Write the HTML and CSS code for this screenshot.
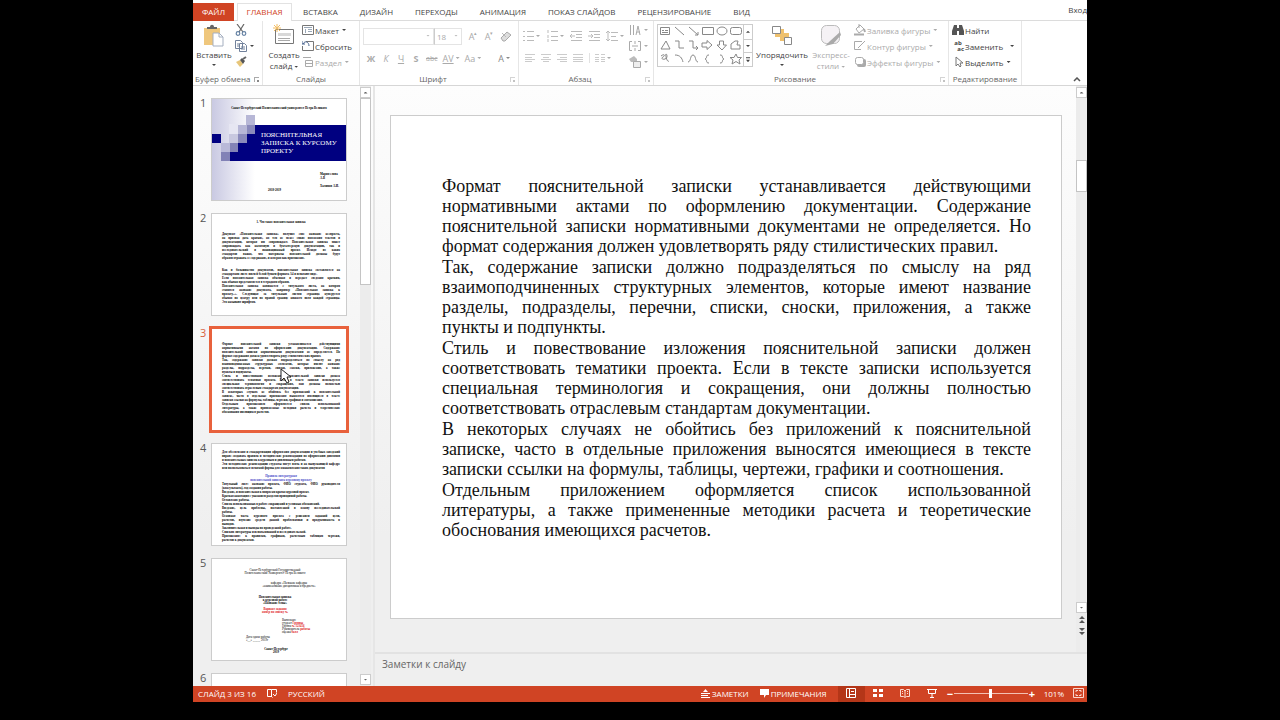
FILE: index.html
```html
<!DOCTYPE html>
<html lang="ru">
<head>
<meta charset="utf-8">
<title>Пояснительная записка</title>
<link rel="stylesheet" href="styles.css">
</head>
<body>
<div class="app">
  <nav class="tabs">
    <button class="tab file">ФАЙЛ</button>
    <button class="tab active">ГЛАВНАЯ</button>
    <button class="tab">ВСТАВКА</button>
    <button class="tab">ДИЗАЙН</button>
    <button class="tab">ПЕРЕХОДЫ</button>
    <button class="tab">АНИМАЦИЯ</button>
    <button class="tab">ПОКАЗ СЛАЙДОВ</button>
    <button class="tab">РЕЦЕНЗИРОВАНИЕ</button>
    <button class="tab">ВИД</button>
    <a class="signin" href="#">Вход</a>
  </nav>

  <div class="ribbon">
    <section class="group g-clip">
      <div class="tools">
        <button class="big"><svg width="22" height="23" viewBox="0 0 22 23"><path d="M1 4h16v17H1z" fill="#efc77d"/><path d="M4 5V3h3c0-3 4-3 4 0h3v2z" fill="#666"/><path d="M10 9h6l4 4v9H10z" fill="#fff" stroke="#a5afc0"/><path d="M16 9v4h4" fill="none" stroke="#a5afc0"/></svg><span>Вставить</span><i class="arr"></i></button>
        <div class="rows">
          <button class="row" aria-label="Вырезать"><svg width="12" height="12" viewBox="0 0 12 12" fill="none" stroke="#666" stroke-width="1.2"><path d="M2 0l6 8M9 0L4 8"/><circle cx="3" cy="9.500" r="1.800" stroke="#6582a4"/><circle cx="9" cy="9.500" r="1.800" stroke="#6582a4"/></svg></button>
          <button class="row" aria-label="Копировать"><svg width="12" height="12" viewBox="0 0 12 12" fill="#fff" stroke="#71819b"><path d="M.5.5h5l2 2v6h-7zM4.500 3.500h5l2 2v6h-7z"/><path d="M6 7h4M6 9h4M2 4h2M2 6h2"/></svg><i class="arr"></i></button>
          <button class="row" aria-label="Формат по образцу"><svg width="12" height="12" viewBox="0 0 12 12"><path d="M1 6l4-2 3 4-3 3z" fill="#e7c67a"/><path d="M5 4l2-2 3 3-2 3z" fill="#555"/><path d="M8 3l3-2" stroke="#666" stroke-width="2"/></svg></button>
        </div>
      </div>
      <h2>Буфер обмена</h2><i class="launch"></i>
    </section>

    <section class="group g-slides">
      <div class="tools">
        <button class="big"><svg width="22" height="23" viewBox="0 0 22 23"><path d="M2.500 5.500h18v14h-18z" fill="#fff" stroke="#777"/><path d="M5 9h13v3H5z" fill="#d8d8d8"/><path d="M5 14.500h12M5 16.500h12" stroke="#aaa"/><path d="M4 0v8M0 4h8M1 1l6 6M7 1L1 7" stroke="#f2bd64"/></svg><span>Создать<br>слайд<i class="arr"></i></span></button>
        <div class="rows">
          <button class="row"><svg width="12" height="12" viewBox="0 0 12 12" fill="none" stroke="#777"><path d="M.5 1.500h11v9H.5z"/><path d="M2 3.500h8M3.500 5v4M6 5.500h4M6 7.500h4" stroke="#9aa8b8"/></svg>Макет<i class="arr"></i></button>
          <button class="row"><svg width="12" height="12" viewBox="0 0 12 12" fill="none" stroke="#777"><path d="M4 1.500h7.500v9H.5V6"/><path d="M1 4c2-4 6-2 6 2M0 1v3h3" stroke="#47638e"/></svg>Сбросить</button>
          <button class="row off"><svg width="12" height="12" viewBox="0 0 12 12" fill="none" stroke="#aaa"><path d="M1 1.500h8M3.500 4.500h7v6h-7zM3 7.500h7"/></svg>Раздел<i class="arr"></i></button>
        </div>
      </div>
      <h2>Слайды</h2>
    </section>

    <section class="group g-font">
      <div class="lines">
        <div class="line">
          <span class="pick"><select class="fontname" aria-label="Шрифт" disabled><option></option></select><i class="arr"></i></span><span class="pick"><select class="fontsize" aria-label="Размер шрифта" disabled><option>18</option></select><i class="arr"></i></span>
          <button class="glyph grow">A<sup>▴</sup></button><button class="glyph grow">A<sup>▾</sup></button>
          <button class="glyph" aria-label="Очистить"><svg width="12" height="12" viewBox="0 0 12 12"><path d="M1 8l6-6 4 3-6 6H3z" fill="#ddd" stroke="#aaa"/><path d="M2 3l4 4" stroke="#bbb"/></svg></button>
        </div>
        <div class="line second">
          <button class="glyph"><b>Ж</b></button><button class="glyph"><em>К</em></button><button class="glyph"><u>Ч</u></button><button class="glyph"><b>S</b></button><button class="glyph tiny"><s>abc</s></button><button class="glyph"><u>AV</u><i class="arr"></i></button><button class="glyph">Aa<i class="arr"></i></button><button class="glyph dark">A<i class="arr"></i></button>
        </div>
      </div>
      <h2>Шрифт</h2><i class="launch pale"></i>
    </section>

    <section class="group g-par">
      <div class="tools">
        <div class="lines">
          <div class="line">
            <button class="glyph" aria-label="Маркеры"><svg width="12" height="12" viewBox="0 0 12 12" stroke="#bbb"><path d="M1 1.500h2M1 6.500h2M1 10.500h2M5 1.500h7M5 6.500h7M5 10.500h7"/></svg><i class="arr"></i></button>
            <button class="glyph" aria-label="Нумерация"><svg width="12" height="12" viewBox="0 0 12 12" stroke="#bbb"><path d="M2 0v3M2 5v3M2 9v3M5 1.500h7M5 6.500h7M5 10.500h7"/></svg><i class="arr"></i></button>
            <button class="glyph" aria-label="Уменьшить отступ"><svg width="12" height="12" viewBox="0 0 12 12" stroke="#bbb" fill="none"><path d="M1 1.500h11M6 4.500h6M6 7.500h6M1 10.500h11M5 6H0M2 4L0 6l2 2"/></svg></button>
            <button class="glyph" aria-label="Увеличить отступ"><svg width="12" height="12" viewBox="0 0 12 12" stroke="#bbb" fill="none"><path d="M1 1.500h11M6 4.500h6M6 7.500h6M1 10.500h11M0 6h5M3 4l2 2-2 2"/></svg></button>
            <button class="glyph" aria-label="Интервал"><svg width="12" height="12" viewBox="0 0 12 12" stroke="#bbb" fill="none"><path d="M5 2.500h7M5 6.500h5M5 10.500h7M2 1v10M0 3l2-2 2 2M0 9l2 2 2-2"/></svg><i class="arr"></i></button>
          </div>
          <div class="line second">
            <button class="glyph" aria-label="По левому краю"><svg width="10" height="10" viewBox="0 0 10 10" stroke="#ccc"><path d="M0 1.500h10M0 4.500h7M0 6.500h10M0 8.500h7"/></svg></button>
            <button class="glyph" aria-label="По центру"><svg width="10" height="10" viewBox="0 0 10 10" stroke="#ccc"><path d="M0 1.500h10M2 4.500h6M0 6.500h10M2 8.500h6"/></svg></button>
            <button class="glyph" aria-label="По правому краю"><svg width="10" height="10" viewBox="0 0 10 10" stroke="#ccc"><path d="M0 1.500h10M3 4.500h7M0 6.500h10M3 8.500h7"/></svg></button>
            <button class="glyph" aria-label="По ширине"><svg width="10" height="10" viewBox="0 0 10 10" stroke="#ccc"><path d="M0 1.500h10M0 4.500h10M0 6.500h10M0 8.500h10"/></svg></button>
            <button class="glyph cols" aria-label="Колонки"><svg width="10" height="10" viewBox="0 0 10 10" stroke="#ccc"><path d="M0 1.500h4M0 4.500h4M0 6.500h4M0 8.500h4M6 1.500h4M6 4.500h4M6 6.500h4M6 8.500h4"/></svg><i class="arr"></i></button>
          </div>
        </div>
        <div class="rows">
          <button class="row off" aria-label="Направление текста"><svg width="12" height="12" viewBox="0 0 12 12" stroke="#aaa" fill="none"><path d="M1.500 1v10M4.500 1v10M7 11l2-9 2 9M8 8h3"/></svg><i class="arr"></i></button>
          <button class="row off" aria-label="Выровнять текст"><svg width="12" height="12" viewBox="0 0 12 12" stroke="#aaa" fill="none"><path d="M3 1.500H.5v9H3M9 1.500h2.500v9H9M3 6h6M6 1v3M6 8v3"/></svg><i class="arr"></i></button>
          <button class="row off" aria-label="SmartArt"><svg width="12" height="12" viewBox="0 0 12 12"><path d="M0 3l5-3 3 3v3H2z" fill="#bbb"/><path d="M4.500 5.500h7v6h-7z" fill="#eee" stroke="#aaa"/></svg><i class="arr"></i></button>
        </div>
      </div>
      <h2>Абзац</h2><i class="launch pale"></i>
    </section>

    <section class="group g-draw">
      <div class="tools">
        <div class="gallery">
          <svg width="85" height="42" viewBox="0 0 85 42" fill="none" stroke="#888"><path d="M2.500 2.500h9v7h-9zM4 5.500h2M4 7.500h6M7 5.500h3"/><path d="M17 2l9 8M31 2l9 8M40 7v3h-3M44.500 2.500h11v7h-11z"/><ellipse cx="64" cy="6" rx="5" ry="4"/><rect x="72.500" y="2.500" width="11" height="7" rx="2"/><path d="M8 16l4 8H3zM17 16h4v7h5M31 16h4v7h5M38 21l2 2-2 2M44 18h5v-2.500l5 4.500-5 4.500V22h-5zM61.500 16h4v4h3L64 25l-5-5h2.500zM73 24v-5l4-3h3l-1 4h3v4z"/><path d="M3 31c4-3 4 0 2 1s-1 3 2 2 2-5 1-5 1 9 3 7M17 30c5 0 7 3 8 7M30 37c3 0 2-7 5-7s2 7 5 7M51 30c-4 0-1 3-4 4 3 1 0 4 4 4M62 30c4 0 1 3 4 4-3 1 0 4-4 4M78 29l1.500 3.500h4L81 35l1 4-4-2.500L74 39l1-4-3-2.500h4z"/></svg>
          <div class="gscroll"><button aria-label="Вверх"><i class="arr up"></i></button><button aria-label="Вниз"><i class="arr"></i></button><button aria-label="Ещё"><i class="arr more"></i></button></div>
        </div>
        <button class="big arrange"><svg width="22" height="23" viewBox="0 0 22 23"><path d="M4 5h9v8H4zM9 9h9v8H9z" fill="#efc16e"/><path d="M1.500 2.500h8v7h-8zM13.500 13.500h7v7h-7z" fill="#fff" stroke="#888"/></svg><span>Упорядочить</span><i class="arr"></i></button>
        <button class="big off"><svg width="22" height="23" viewBox="0 0 22 23"><rect x="1.500" y="1.500" width="18" height="18" rx="5" fill="#f5f2f5" stroke="#bbb"/><path d="M20 8L10 17l-5 5 8-2 8-9z" fill="#aaa"/></svg><span>Экспресс-<br>стили<i class="arr"></i></span></button>
        <div class="rows">
          <button class="row off"><svg width="12" height="12" viewBox="0 0 12 12" fill="none" stroke="#aaa"><path d="M2 5l4-4 4 4-5 4zM5 0v4"/><path d="M10 5l1 3M0 10.500h10" stroke-width="2"/></svg>Заливка фигуры<i class="arr"></i></button>
          <button class="row off"><svg width="12" height="12" viewBox="0 0 12 12" fill="none" stroke="#aaa"><path d="M8 1.500H.5v8H7M4 8l7-7" /></svg>Контур фигуры<i class="arr"></i></button>
          <button class="row off"><svg width="12" height="12" viewBox="0 0 12 12"><rect x="3" y="3" width="9" height="8" rx="2" fill="#aaa"/><rect x="1.500" y="1.500" width="8" height="7" rx="2" fill="#fff" stroke="#aaa"/></svg>Эффекты фигуры<i class="arr"></i></button>
        </div>
      </div>
      <h2>Рисование</h2><i class="launch pale"></i>
    </section>

    <section class="group g-edit">
      <div class="tools">
        <div class="rows">
          <button class="row"><svg width="12" height="12" viewBox="0 0 12 12" fill="#555"><path d="M2 1h3v3h2V1h3l2 6v4H7V7H5v4H0V7z"/></svg>Найти</button>
          <button class="row"><span class="swap" aria-hidden="true"><span>ab</span><span>ac</span></span>Заменить<i class="arr far"></i></button>
          <button class="row"><svg width="12" height="12" viewBox="0 0 12 12"><path d="M4 1v9l2-2 2 3 1-1-1-3h3z" fill="#fff" stroke="#777"/></svg>Выделить<i class="arr"></i></button>
        </div>
      </div>
      <h2>Редактирование</h2>
    </section>
    <button class="collapse" aria-label="Свернуть ленту"><svg width="8" height="5" viewBox="0 0 8 5"><path d="M1 4l3-3 3 3" fill="none" stroke="#555" stroke-width="1.500"/></svg></button>
  </div>

  <main class="work">
    <aside class="thumbs">
      <ol class="list">
        <li><span class="num">1</span><div class="thumb cover">
          <p class="uni">Санкт-Петербургский Политехнический университет Петра Великого</p>
          <div class="band">ПОЯСНИТЕЛЬНАЯ<br>ЗАПИСКА К КУРСОМУ<br>ПРОЕКТУ</div>
          <svg class="steps" width="44" height="48" viewBox="0 0 44 48"><path d="M17 9h9v10h-9z" fill="#e6e6f2"/><path d="M0 19h9v9H0z" fill="#000080"/><path d="M34 0h9v10h-9zM26 10h9v9h-9z" fill="#b7b7d6"/><path d="M35 10h8v9h-8zM26 19h9v9h-9z" fill="#8a8abb"/><path d="M17 19h9v9h-9z" fill="#c8c8df"/><path d="M18 28h8v9h-8zM9 37h9v9H9z" fill="#8282b6"/><path d="M9 28h9v9H9z" fill="#b9b9d8"/></svg>
          <p class="who">Мария слова<br>А.В<br><br>Халимов А.И.</p>
          <p class="when">2018-2019</p>
        </div></li>
        <li><span class="num">2</span><div class="thumb doc">
          <p class="head">1. Что такое пояснительная записка</p>
          <p class="gap"><span>Документ «Пояснительная записка» получил свое название неспроста,</span><span>он призван дать краткие, но тем не менее емкие пояснения текстов и</span><span>документации, которая им сопровождает. Пояснительная записка может</span><span>сопровождать как налоговую и бухгалтерскую документацию, так и</span><span>исследовательский и инновационный проект. Исходя из каких</span><span>стандартов важно, что материалы пояснительной должны будут</span><span class="last">образом отражать ее содержание, и неверно как приложение.</span></p>
          <p class="gap"><span>Как и большинство документов, пояснительная записка составляется на</span><span class="last">стандартном листе писчей белой бумаги формата А4 и печатают виде.</span><span>Если пояснительная записка объемная и передает сведения кратким,</span><span class="last">как обычно представляется в тетрадном образом.</span><span>Пояснительная записка начинается с титульного листа, на котором</span><span>ставится название документа, например «Пояснительная записка к</span><span>проекту...». Следующая за титульным листом страница нумеруется</span><span>обычно по центру или по правой границе нижнего поля каждой страницы.</span><span class="last">Это называют шрифтом.</span></p>
        </div></li>
        <li><span class="num sel">3</span><div class="thumb doc selected">
          <p><span>Формат пояснительной записки устанавливается действующими</span><span>нормативными актами по оформлению документации. Содержание</span><span>пояснительной записки нормативными документами не определяется. Но</span><span class="last">формат содержания должен удовлетворять ряду стилистических правил.</span><span>Так, содержание записки должно подразделяться по смыслу на ряд</span><span>взаимоподчиненных структурных элементов, которые имеют название</span><span>разделы, подразделы, перечни, списки, сноски, приложения, а также</span><span class="last">пункты и подпункты.</span><span>Стиль и повествование изложения пояснительной записки должен</span><span>соответствовать тематики проекта. Если в тексте записки используется</span><span>специальная терминология и сокращения, они должны полностью</span><span class="last">соответствовать отраслевым стандартам документации.</span><span>В некоторых случаях не обойтись без приложений к пояснительной</span><span>записке, часто в отдельные приложения выносятся имеющиеся в тексте</span><span class="last">записки ссылки на формулы, таблицы, чертежи, графики и соотношения.</span><span>Отдельным приложением оформляется список использованной</span><span>литературы, а также примененные методики расчета и теоретические</span><span class="last">обоснования имеющихся расчетов.</span></p>
          <svg class="cursor" width="12" height="17" viewBox="0 0 12 17"><path d="M1 1v12l3-3 3 5 2-1-2-5h4z" fill="#fff" stroke="#222"/></svg>
        </div></li>
        <li><span class="num">4</span><div class="thumb doc">
          <p><span>Для обеспечения и стандартизации оформления документации и учебных заведений</span><span>вправе создавать правила и методические рекомендации по оформлению дипломов</span><span class="last">и пояснительных записок к курсовым и дипломным работам.</span><span>Эти методические рекомендации студенты могут взять и на выпускающей кафедре</span><span class="last">или воспользоваться печатной формы для ознакомления таких документов</span></p>
          <p class="blue">Правила литературная<br>пояснительной записки к курсовому проекту</p>
          <p><span>Титульный лист: название проекта, ФИО студента, ФИО руководителя</span><span class="last">(консультанта), год создания работы.</span><span class="last">Введение, и пояснительная к вопросам кратко курсовой проект.</span><span class="last">Краткая аннотация с указанием разделов проводимой работы.</span><span class="last">Оглавление работы.</span><span class="last">Список использованных в работе сокращений и условных обозначений.</span><span>Введение, цель проблемы, поставленной в основу исследовательской</span><span class="last">работы.</span><span>Основная часть курсового проекта с решением заданной цели,</span><span>расчетов, изучение средств данной проблематики и продуктивность в</span><span class="last">выводов.</span><span class="last">Заключительная и выводы по проведенной работе.</span><span class="last">Списком литературы и использованной и исследовательской.</span><span>Приложения: к правилам, графикам, расчетным таблицам чертежи,</span><span class="last">расчетов к документам.</span></p>
        </div></li>
        <li><span class="num">5</span><div class="thumb title">
          <p class="t1">Санкт-Петербургский Государственный<br>Политехнический Университет Петра Великого</p>
          <p class="t2">кафедра «Название кафедры<br>«наименование дисциплины и предмета»</p>
          <p class="t3">Пояснительная записка<br>к курсовой работе<br>«Название темы»</p>
          <p class="t4">Вариант задания<br>номер по списку №</p>
          <p class="t5">Выполнил:<br>студент <b>Группы</b><br>Группа <b>№ 123456</b><br>Руководитель <b>работы</b><br>оценка <b>балл</b></p>
          <p class="t6">Дата сдачи работы<br>«__» _____ 2019г</p>
          <p class="t7">Санкт-Петербург<br>2019</p>
        </div></li>
        <li><span class="num">6</span><div class="thumb"></div></li>
      </ol>
      <div class="scroll"><button aria-label="Вверх"><i class="arr up"></i></button><div class="handle tall"></div><button class="down" aria-label="Вниз"><i class="arr"></i></button></div>
    </aside>

    <section class="editor">
      <div class="stage">
        <article class="slide">
          <p><span>Формат пояснительной записки устанавливается действующими</span><span>нормативными актами по оформлению документации. Содержание</span><span>пояснительной записки нормативными документами не определяется. Но</span><span class="last">формат содержания должен удовлетворять ряду стилистических правил.</span></p>
          <p><span>Так, содержание записки должно подразделяться по смыслу на ряд</span><span>взаимоподчиненных структурных элементов, которые имеют название</span><span>разделы, подразделы, перечни, списки, сноски, приложения, а также</span><span class="last">пункты и подпункты.</span></p>
          <p><span>Стиль и повествование изложения пояснительной записки должен</span><span>соответствовать тематики проекта. Если в тексте записки используется</span><span>специальная терминология и сокращения, они должны полностью</span><span class="last">соответствовать отраслевым стандартам документации.</span></p>
          <p><span>В некоторых случаях не обойтись без приложений к пояснительной</span><span>записке, часто в отдельные приложения выносятся имеющиеся в тексте</span><span class="last">записки ссылки на формулы, таблицы, чертежи, графики и соотношения.</span></p>
          <p><span>Отдельным приложением оформляется список использованной</span><span>литературы, а также примененные методики расчета и теоретические</span><span class="last">обоснования имеющихся расчетов.</span></p>
        </article>
        <div class="scroll"><button aria-label="Вверх"><i class="arr up"></i></button><div class="handle short"></div><button class="down" aria-label="Вниз"><i class="arr"></i></button>
          <button class="jump" aria-label="Предыдущий слайд"><svg width="6" height="7" viewBox="0 0 6 7" fill="#555"><path d="M0 3l3-3 3 3zM0 7l3-3 3 3z"/></svg></button><button class="jump" aria-label="Следующий слайд"><svg width="6" height="7" viewBox="0 0 6 7" fill="#555"><path d="M0 0h6L3 3zM0 4h6L3 7z"/></svg></button></div>
      </div>
      <div class="notes">Заметки к слайду</div>
    </section>
  </main>

  <footer class="status">
    <span class="count">СЛАЙД 3 ИЗ 16</span>
    <button class="spell" aria-label="Правописание"><svg width="10" height="10" viewBox="0 0 10 10" fill="none" stroke="#fff"><path d="M4.500 9V1.500H.5v7h4l1 1M4.500 1.500h5v3M6 6l2 2 2-3"/></svg></button>
    <button class="lang">РУССКИЙ</button>
    <button class="notesbtn"><svg width="9" height="9" viewBox="0 0 9 9" stroke="#fff"><path d="M0 4.500h9M0 6.500h7M0 8.500h9"/><path d="M2 3l2.500-3L7 3z" fill="#fff" stroke="none"/></svg>ЗАМЕТКИ</button>
    <button class="comments"><svg width="9" height="9" viewBox="0 0 9 9" fill="#fff"><path d="M0 0h9v6H6L4 9V6H0z"/></svg>ПРИМЕЧАНИЯ</button>
    <button class="view on" aria-label="Обычный"><svg width="10" height="10" viewBox="0 0 10 10" fill="none" stroke="#fff"><path d="M.5.5h9v9h-9zM3.500 1v8M5 3.500h3M4 6.500h5"/></svg></button>
    <button class="view" aria-label="Сортировщик"><svg width="10" height="10" viewBox="0 0 10 10" fill="#fff"><path d="M0 1h4v3H0zM6 1h4v3H6zM0 6h4v3H0zM6 6h4v3H6z"/></svg></button>
    <button class="view" aria-label="Чтение"><svg width="10" height="10" viewBox="0 0 10 10" fill="none" stroke="#fbd8cf"><path d="M.5 1.500h3L5 3l1.500-1.500h3v7h-3L5 9.500 3.500 8.500h-3zM5 3v6M2 3.500h1M2 5.500h1M7 3.500h1M7 5.500h1"/></svg></button>
    <button class="view" aria-label="Показ слайдов"><svg width="10" height="10" viewBox="0 0 10 10" fill="none" stroke="#fff"><path d="M0 1.500h10M1.500 2v3.500h7V2M5 5v4M3 9.500h4"/></svg></button>
    <div class="zoom"><button aria-label="Уменьшить">−</button><input type="range" min="0" max="100" value="50" aria-label="Масштаб"><button aria-label="Увеличить">+</button></div>
    <button class="pct">101%</button>
    <button class="fit" aria-label="Вписать"><svg width="11" height="10" viewBox="0 0 11 10" fill="none" stroke="#fbd8cf"><path d="M.5.5h10v9H.5zM3 4V2.500h2M8 4V2.500H6M3 6v1.500h2M8 6v1.500H6"/></svg></button>
  </footer>
</div>
</body>
</html>
```
FILE: styles.css
```css
* { box-sizing: border-box; }
body { margin: 0; background: #000; }
.app {
  height: 100vh; padding: 0 193px 18px; background: #000; overflow: hidden;
  display: flex; flex-direction: column;
  font: 8px/11px "Open Sans", "Noto Sans", sans-serif; color: #444;
}
button { font: inherit; color: inherit; background: none; border: 0; padding: 0; margin: 0; white-space: nowrap; }
svg { display: block; flex: none; }
h2, p, ol { margin: 0; padding: 0; list-style: none; }

.tabs { display: flex; height: 21px; padding-top: 3px; background: #fff; border-bottom: 1px solid #dcdcdc; }
.tab { padding: 0 11px 2px; height: 18px; }
.tab.file { background: #d04424; color: #fff; width: 41px; padding: 0 0 2px; }
.tab.active { margin-left: 3px; width: 55px; padding: 0 0 2px; color: #d04424; background: #fff; border: 1px solid #e2e2e2; border-bottom: 0; }
.signin { margin-left: auto; color: #444; text-decoration: none; line-height: 13px; }

.ribbon { display: flex; position: relative; height: 65px; background: #fff; border-bottom: 1px solid #d6d6d6; }
.group { position: relative; border-right: 1px solid #e6e6e6; padding: 1px 3px 0; flex: none; }
.group h2 { font-size: 8px; font-weight: 400; color: #666; text-align: center; line-height: 14px; margin-top: 2px; white-space: nowrap; }
.g-clip { width: 70px; }
.g-slides { width: 97px; }
.g-font { width: 159px; }
.g-par { width: 135px; }
.g-draw { width: 295px; }
.g-edit { width: 73px; }
.group.g-clip h2 { text-align: left; margin-left: -1px; }
.g-font h2, .g-par h2, .g-draw h2 { padding-right: 12px; }
.tools { display: flex; height: 48px; gap: 3px; }
.g-slides .tools { gap: 0; }
.big { display: flex; flex-direction: column; align-items: center; width: 36px; padding-top: 2px; }
.big > span { margin-top: 2px; }
.big > .arr { margin-top: 4px; margin-left: 0; }
.rows { display: grid; grid-template-rows: repeat(3, 16px); }
.row { display: flex; align-items: center; gap: 1px; }
.off { color: #aaa; }
.arr { display: inline-block; flex: none; width: 4px; height: 2px; background: currentColor; clip-path: polygon(0 0, 100% 0, 50% 100%); margin-left: 2px; vertical-align: middle; }
.arr.up { clip-path: polygon(50% 0, 100% 100%, 0 100%); }
.arr.more { height: 5px; clip-path: polygon(0 0, 100% 0, 100% 20%, 0 20%, 0 50%, 100% 50%, 50% 100%, 0 50%); }
.arr.far { margin-left: 6px; }
.launch { position: absolute; right: 3px; bottom: 3px; width: 5px; height: 5px; border: 1px solid #aaa; border-right: 0; border-bottom: 0; }
.launch::after { content: ""; position: absolute; right: 0; bottom: 0; width: 2px; height: 2px; background: #888; }
.launch.pale { opacity: 0.5; }
.lines { height: 48px; padding-top: 5px; }
.line { display: flex; align-items: center; height: 18px; color: #aaa; }
.line.second { margin-top: 4px; gap: 5px; padding-left: 3px; }
.glyph { display: flex; align-items: center; justify-content: center; min-width: 10px; font-size: 9px; }
.glyph.tiny { font-size: 7px; }
.glyph sup { font-size: 5px; line-height: 5px; align-self: flex-start; }
.glyph.dark { color: #888; margin-left: 12px; }
.pick { position: relative; display: flex; }
.pick .arr { position: absolute; right: 4px; top: 7px; color: #bbb; }
select { appearance: none; font: inherit; color: #aaa; background: #fff; border: 1px solid #e4e4e4; height: 17px; padding: 0 2px; opacity: 1; }
.fontname { width: 71px; }
.fontsize { width: 28px; border-left-color: #ccc; }
.g-font .line:first-child .glyph { margin-left: 6px; }
.g-par .line { gap: 6px; }
.g-par .lines { width: 104px; }
.cols { border-left: 1px solid #e2e2e2; padding-left: 5px; }
.gallery { display: flex; width: 96px; height: 43px; margin-top: 2px; border: 1px solid #ccc; }
.gscroll { display: grid; grid-template-rows: repeat(3, 1fr); width: 10px; border-left: 1px solid #ccc; }
.gscroll button { display: grid; place-items: center; }
.gscroll button + button { border-top: 1px solid #ccc; }
.gscroll .arr { margin: 0; }
.arrange { width: 52px; }
.g-draw .big.off { width: 40px; }
.swap { display: flex; flex-direction: column; width: 12px; font-size: 6px; line-height: 6px; font-weight: 700; }
.swap span + span { align-self: flex-end; }
.collapse { position: absolute; right: 6px; bottom: 3px; }

.work { flex: 1; min-height: 0; display: flex; background: linear-gradient(#fdfdfd, #efefef 75%); }
.thumbs { width: 182px; flex: none; display: flex; border-right: 2px solid #e6e6e6; overflow: hidden; }
.list { flex: 1; padding: 12px 13px 0 7px; display: flex; flex-direction: column; gap: 12px; min-height: 0; overflow: hidden; }
.list li { display: flex; flex: none; gap: 3px; }
.num { width: 8px; font-size: 11px; line-height: 9px; color: #555; }
.num.sel { color: #d8623f; }
.thumb { position: relative; flex: 1; height: 103px; border: 1px solid #ccc; background: #fff; color: #000; overflow: hidden; font: 3px/4px "Liberation Serif", serif; }
.thumb.selected { outline: 3px solid #e8613c; outline-offset: -1px; border-color: #fff; }
.doc { padding: 6px 6px 0 10px; font-weight: 700; }
.doc span, .slide span { display: block; text-align: justify; text-align-last: justify; white-space: nowrap; }
.doc span.last, .slide span.last { text-align-last: left; }
.doc .head { text-align: center; }
.doc .gap { margin-top: 8px; }
.doc.selected { padding-top: 13px; }
.doc .blue { text-align: center; color: #4a4ac8; margin-top: 4px; }
.cover { background: linear-gradient(90deg, #c9c9e2, #fff 32%); }
.cover .uni { text-align: center; font-weight: 700; padding-top: 7px; }
.cover .band { margin: 15px 0 0 17px; height: 36px; padding: 6px 0 0 32px; background: #000080; color: #fff; font-size: 7px; line-height: 8px; white-space: nowrap; }
.steps { position: absolute; left: 0; top: 16px; }
.cover .who { margin: 11px 0 0 108px; font-weight: 700; white-space: nowrap; }
.cover .when { margin-left: 56px; font-weight: 700; }
.title { text-align: center; padding-top: 10px; }
.title p { line-height: 3px; white-space: nowrap; }
.title .t1 { margin-right: 8px; }
.title .t2 { margin: 7px 0 0 20px; }
.title .t3 { margin: 8px 8px 0 0; font-weight: 700; }
.title .t4 { margin: 3px 8px 0 0; color: #e02020; font-weight: 700; }
.title .t5 { margin: 5px 0 0 70px; text-align: left; }
.title .t5 b { color: #e02020; }
.title .t6 { margin: 2px 0 0 34px; text-align: left; }
.title .t7 { margin: 6px 6px 0 0; font-weight: 700; }
.cursor { position: absolute; left: 68px; top: 39px; }

.scroll { width: 11px; flex: none; display: flex; flex-direction: column; padding: 1px 0; background: #ececec; }
.scroll button { height: 11px; flex: none; display: grid; place-items: center; border: 1px solid #ccc; background: #fff; color: #666; }
.scroll .arr { margin: 0; }
.scroll .down { margin-top: auto; }
.scroll .jump { border: 0; background: none; height: 12px; }
.handle { background: #fff; border: 1px solid #c4c4c4; flex: none; }
.handle.tall { height: 187px; }
.handle.short { height: 32px; margin-top: 62px; }
.thumbs .scroll { margin-right: 2px; }

.editor { flex: 1; min-width: 0; display: flex; flex-direction: column; }
.stage { flex: 1; min-height: 0; display: flex; align-items: flex-start; gap: 14px; padding-left: 15px; }
.stage .scroll { align-self: stretch; padding-bottom: 15px; }
.slide { flex: 1; margin-top: 29px; aspect-ratio: 4 / 3; background: #fff; border: 1px solid #ccc; padding: 60px 30px 0 51px; font: 18px/20px "Liberation Serif", serif; color: #111; }
.slide p + p { margin-top: 1px; }
.notes { height: 34px; flex: none; border-top: 2px solid #e2e2e2; padding: 3px 7px; font-size: 10px; line-height: 14px; color: #666; }

.status { flex: none; height: 16px; display: flex; align-items: center; background: #d04424; color: #fff; padding: 0 3px 2px 5px; overflow: hidden; }
.spell { margin-left: 11px; }
.lang { margin-left: 11px; }
.notesbtn, .comments { display: flex; align-items: center; gap: 2px; }
.notesbtn { margin-left: auto; }
.comments { margin: 0 11px; }
.view { width: 27px; height: 18px; display: grid; place-items: center; }
.view.on { background: #b43618; }
.zoom { display: flex; align-items: center; margin-left: 1px; }
.zoom button { width: 6px; font-size: 11px; font-weight: 700; }
input[type="range"] { appearance: none; width: 74px; height: 12px; margin: 0 1px; background: linear-gradient(#f3c0b2, #f3c0b2) center / 100% 1px no-repeat; }
input[type="range"]::-webkit-slider-thumb { appearance: none; width: 3px; height: 9px; background: #fff; border: 0; }
.pct { margin-left: 9px; }
.fit { margin-left: 9px; }
```
